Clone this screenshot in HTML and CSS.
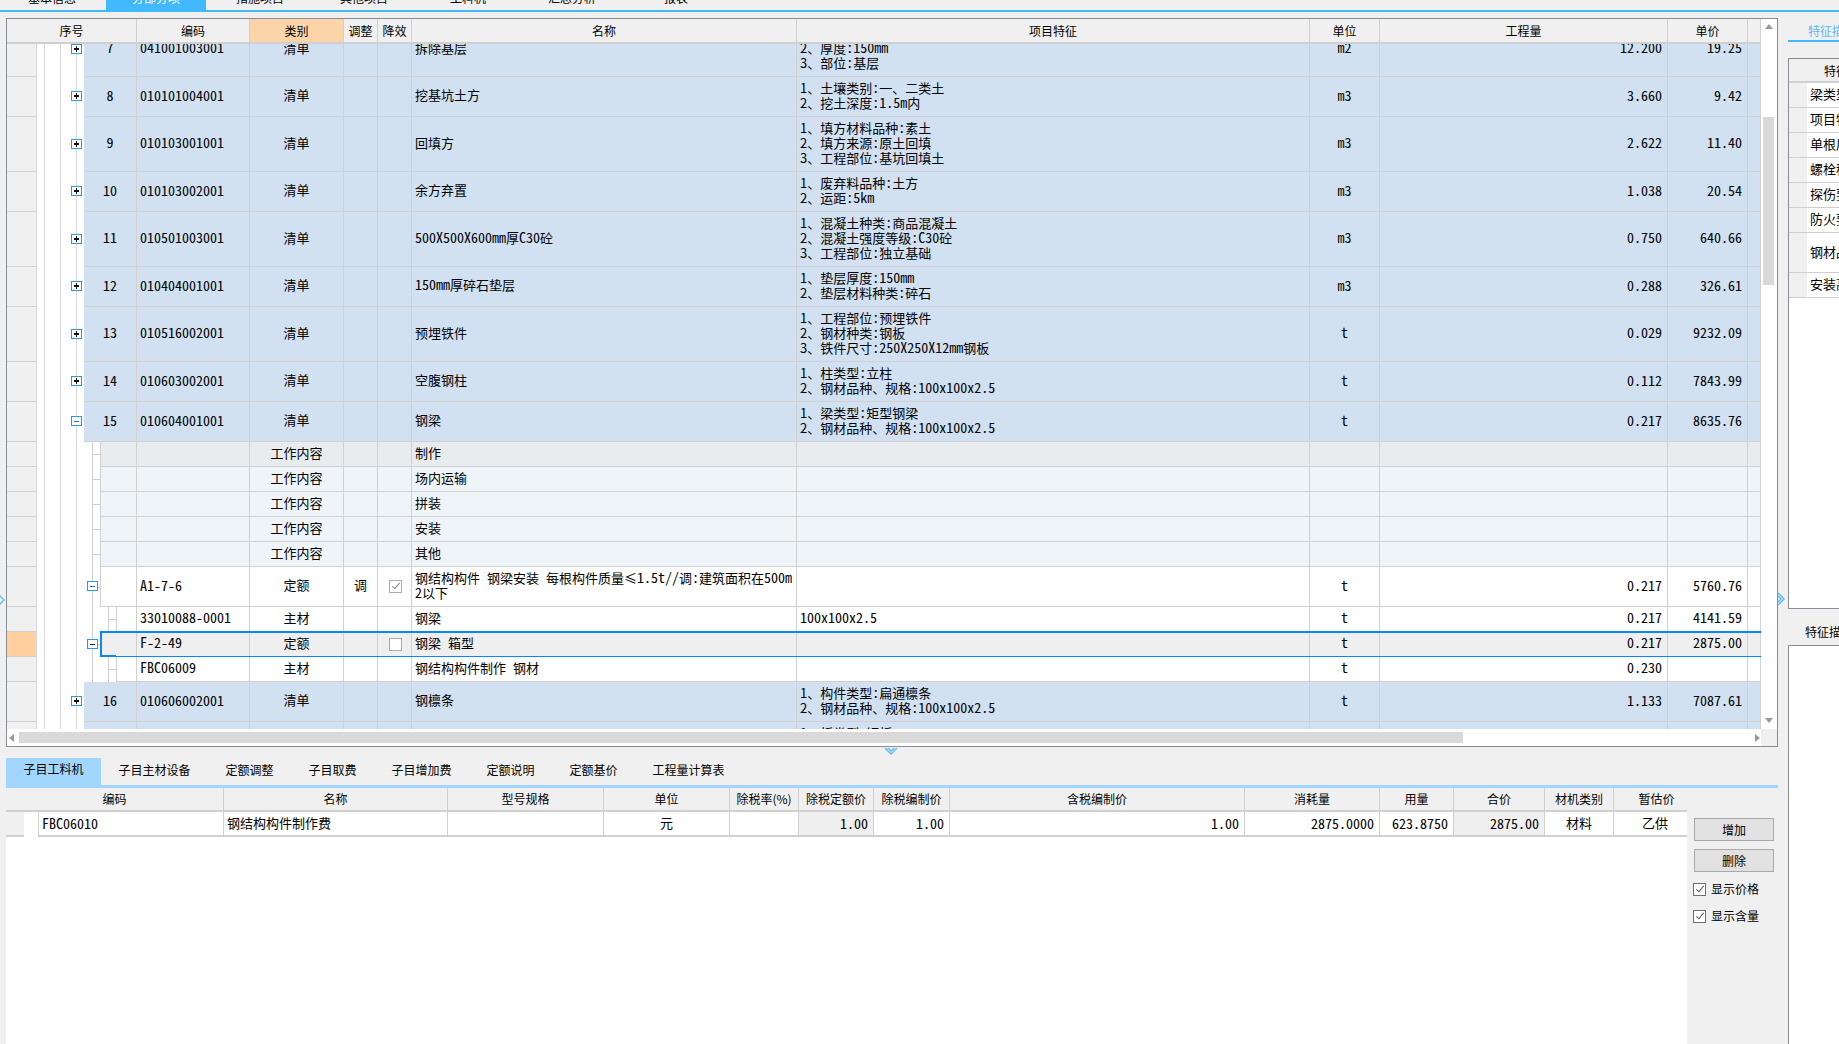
FILE: index.html
```html
<!DOCTYPE html>
<html lang="zh-CN">
<head>
    <meta charset="UTF-8">
    <title>分部分项</title>
    <link rel="stylesheet" href="styles.css">
</head>
<body>
<div class="page">

    <div class="topbar">
        <div class="tabs">
            <div class="tab">基本信息</div>
            <div class="tab active">分部分项</div>
            <div class="tab">措施项目</div>
            <div class="tab">其他项目</div>
            <div class="tab">工料机</div>
            <div class="tab">汇总分析</div>
            <div class="tab">报表</div>
        </div>
    </div>

    <div class="main">
        <div class="left">

            <div class="frame">
                <div class="frame-top">
                    <div class="grid">
                        <table class="grid-head">
                            <colgroup>
                                <col class="c-ind"><col class="c-gut"><col class="c-seq"><col class="c-code"><col class="c-type"><col class="c-adj"><col class="c-dec"><col class="c-name"><col class="c-feat"><col class="c-unit"><col class="c-qty"><col class="c-price"><col class="c-end">
                            </colgroup>
                            <tr>
                                <th colspan="3">序号</th>
                                <th>编码</th>
                                <th class="sorted">类别</th>
                                <th>调整</th>
                                <th>降效</th>
                                <th>名称</th>
                                <th>项目特征</th>
                                <th>单位</th>
                                <th>工程量</th>
                                <th>单价</th>
                                <th></th>
                            </tr>
                        </table>
                        <div class="grid-clip">
                            <table class="grid-body">
                                <colgroup>
                                    <col class="c-ind"><col class="c-gut"><col class="c-seq"><col class="c-code"><col class="c-type"><col class="c-adj"><col class="c-dec"><col class="c-name"><col class="c-feat"><col class="c-unit"><col class="c-qty"><col class="c-price"><col class="c-end">
                                </colgroup>
                                <tr class="q h55">
                                    <td class="ind"></td><td class="gut"><span class="exp plus"></span></td><td class="seq m">7</td>
                                    <td class="m">041001003001</td><td class="ctr">清单</td><td></td><td></td>
                                    <td>拆除基层</td>
                                    <td>1、材质<span class="m">:</span>水泥稳定层<br>2、厚度<span class="m">:150mm</span><br>3、部位<span class="m">:</span>基层</td>
                                    <td class="ctr m">m2</td><td class="num m">12.200</td><td class="num m">19.25</td><td></td>
                                </tr>
                                <tr class="q h40">
                                    <td class="ind"></td><td class="gut"><span class="exp plus"></span></td><td class="seq m">8</td>
                                    <td class="m">010101004001</td><td class="ctr">清单</td><td></td><td></td>
                                    <td>挖基坑土方</td>
                                    <td>1、土壤类别<span class="m">:</span>一、二类土<br>2、挖土深度<span class="m">:1.5m</span>内</td>
                                    <td class="ctr m">m3</td><td class="num m">3.660</td><td class="num m">9.42</td><td></td>
                                </tr>
                                <tr class="q h55">
                                    <td class="ind"></td><td class="gut"><span class="exp plus"></span></td><td class="seq m">9</td>
                                    <td class="m">010103001001</td><td class="ctr">清单</td><td></td><td></td>
                                    <td>回填方</td>
                                    <td>1、填方材料品种<span class="m">:</span>素土<br>2、填方来源<span class="m">:</span>原土回填<br>3、工程部位<span class="m">:</span>基坑回填土</td>
                                    <td class="ctr m">m3</td><td class="num m">2.622</td><td class="num m">11.40</td><td></td>
                                </tr>
                                <tr class="q h40">
                                    <td class="ind"></td><td class="gut"><span class="exp plus"></span></td><td class="seq m">10</td>
                                    <td class="m">010103002001</td><td class="ctr">清单</td><td></td><td></td>
                                    <td>余方弃置</td>
                                    <td>1、废弃料品种<span class="m">:</span>土方<br>2、运距<span class="m">:5km</span></td>
                                    <td class="ctr m">m3</td><td class="num m">1.038</td><td class="num m">20.54</td><td></td>
                                </tr>
                                <tr class="q h55">
                                    <td class="ind"></td><td class="gut"><span class="exp plus"></span></td><td class="seq m">11</td>
                                    <td class="m">010501003001</td><td class="ctr">清单</td><td></td><td></td>
                                    <td><span class="m">500X500X600mm</span>厚<span class="m">C30</span>砼</td>
                                    <td>1、混凝土种类<span class="m">:</span>商品混凝土<br>2、混凝土强度等级<span class="m">:C30</span>砼<br>3、工程部位<span class="m">:</span>独立基础</td>
                                    <td class="ctr m">m3</td><td class="num m">0.750</td><td class="num m">640.66</td><td></td>
                                </tr>
                                <tr class="q h40">
                                    <td class="ind"></td><td class="gut"><span class="exp plus"></span></td><td class="seq m">12</td>
                                    <td class="m">010404001001</td><td class="ctr">清单</td><td></td><td></td>
                                    <td><span class="m">150mm</span>厚碎石垫层</td>
                                    <td>1、垫层厚度<span class="m">:150mm</span><br>2、垫层材料种类<span class="m">:</span>碎石</td>
                                    <td class="ctr m">m3</td><td class="num m">0.288</td><td class="num m">326.61</td><td></td>
                                </tr>
                                <tr class="q h55">
                                    <td class="ind"></td><td class="gut"><span class="exp plus"></span></td><td class="seq m">13</td>
                                    <td class="m">010516002001</td><td class="ctr">清单</td><td></td><td></td>
                                    <td>预埋铁件</td>
                                    <td>1、工程部位<span class="m">:</span>预埋铁件<br>2、钢材种类<span class="m">:</span>钢板<br>3、铁件尺寸<span class="m">:250X250X12mm</span>钢板</td>
                                    <td class="ctr m">t</td><td class="num m">0.029</td><td class="num m">9232.09</td><td></td>
                                </tr>
                                <tr class="q h40">
                                    <td class="ind"></td><td class="gut"><span class="exp plus"></span></td><td class="seq m">14</td>
                                    <td class="m">010603002001</td><td class="ctr">清单</td><td></td><td></td>
                                    <td>空腹钢柱</td>
                                    <td>1、柱类型<span class="m">:</span>立柱<br>2、钢材品种、规格<span class="m">:100x100x2.5</span></td>
                                    <td class="ctr m">t</td><td class="num m">0.112</td><td class="num m">7843.99</td><td></td>
                                </tr>
                                <tr class="q h40">
                                    <td class="ind"></td><td class="gut"><span class="exp minus"></span></td><td class="seq m">15</td>
                                    <td class="m">010604001001</td><td class="ctr">清单</td><td></td><td></td>
                                    <td>钢梁</td>
                                    <td>1、梁类型<span class="m">:</span>矩型钢梁<br>2、钢材品种、规格<span class="m">:100x100x2.5</span></td>
                                    <td class="ctr m">t</td><td class="num m">0.217</td><td class="num m">8635.76</td><td></td>
                                </tr>

                                <tr class="w0 h25">
                                    <td class="ind"></td><td class="gut"></td><td class="s1"></td>
                                    <td></td><td class="ctr">工作内容</td><td></td><td></td>
                                    <td>制作</td><td></td><td></td><td></td><td></td><td></td>
                                </tr>
                                <tr class="w h25">
                                    <td class="ind"></td><td class="gut"></td><td class="s1"></td>
                                    <td></td><td class="ctr">工作内容</td><td></td><td></td>
                                    <td>场内运输</td><td></td><td></td><td></td><td></td><td></td>
                                </tr>
                                <tr class="w h25">
                                    <td class="ind"></td><td class="gut"></td><td class="s1"></td>
                                    <td></td><td class="ctr">工作内容</td><td></td><td></td>
                                    <td>拼装</td><td></td><td></td><td></td><td></td><td></td>
                                </tr>
                                <tr class="w h25">
                                    <td class="ind"></td><td class="gut"></td><td class="s1"></td>
                                    <td></td><td class="ctr">工作内容</td><td></td><td></td>
                                    <td>安装</td><td></td><td></td><td></td><td></td><td></td>
                                </tr>
                                <tr class="w h25">
                                    <td class="ind"></td><td class="gut"></td><td class="s1"></td>
                                    <td></td><td class="ctr">工作内容</td><td></td><td></td>
                                    <td>其他</td><td></td><td></td><td></td><td></td><td></td>
                                </tr>

                                <tr class="d h40">
                                    <td class="ind"></td><td class="gut"></td><td class="s1"><span class="exp minus nested"></span></td>
                                    <td class="m">A1-7-6</td><td class="ctr">定额</td><td class="ctr">调</td>
                                    <td class="ctr"><span class="chk on"></span></td>
                                    <td>钢结构构件<span class="m"> </span>钢梁安装<span class="m"> </span>每根构件质量≤<span class="m">1.5t//</span>调<span class="m">:</span>建筑面积在<span class="m">500m</span><br><span class="m">2</span>以下</td>
                                    <td></td><td class="ctr m">t</td><td class="num m">0.217</td><td class="num m">5760.76</td><td></td>
                                </tr>
                                <tr class="d h25">
                                    <td class="ind"></td><td class="gut"></td><td class="s2"></td>
                                    <td class="m">33010088-0001</td><td class="ctr">主材</td><td></td><td></td>
                                    <td>钢梁</td><td class="m">100x100x2.5</td>
                                    <td class="ctr m">t</td><td class="num m">0.217</td><td class="num m">4141.59</td><td></td>
                                </tr>
                                <tr class="sel h25">
                                    <td class="ind picked"></td><td class="gut"></td>
                                    <td class="s1"><span class="exp minus nested dark"></span><div class="selbox"></div></td>
                                    <td class="m">F-2-49</td><td class="ctr">定额</td><td></td>
                                    <td class="ctr"><span class="chk"></span></td>
                                    <td>钢梁<span class="m"> </span>箱型</td>
                                    <td></td><td class="ctr m">t</td><td class="num m">0.217</td><td class="num m">2875.00</td><td></td>
                                </tr>
                                <tr class="d h25">
                                    <td class="ind"></td><td class="gut"></td><td class="s2"></td>
                                    <td class="m">FBC06009</td><td class="ctr">主材</td><td></td><td></td>
                                    <td>钢结构构件制作<span class="m"> </span>钢材</td>
                                    <td></td><td class="ctr m">t</td><td class="num m">0.230</td><td></td><td></td>
                                </tr>

                                <tr class="q h40">
                                    <td class="ind"></td><td class="gut"><span class="exp plus"></span></td><td class="seq m">16</td>
                                    <td class="m">010606002001</td><td class="ctr">清单</td><td></td><td></td>
                                    <td>钢檩条</td>
                                    <td>1、构件类型<span class="m">:</span>扁通檩条<br>2、钢材品种、规格<span class="m">:100x100x2.5</span></td>
                                    <td class="ctr m">t</td><td class="num m">1.133</td><td class="num m">7087.61</td><td></td>
                                </tr>
                                <tr class="q h40">
                                    <td class="ind"></td><td class="gut"><span class="exp plus"></span></td><td class="seq m">17</td>
                                    <td class="m">010607005001</td><td class="ctr">清单</td><td></td><td></td>
                                    <td>钢板</td>
                                    <td>1、板类型<span class="m">:</span>钢板<br>2、钢材品种、规格<span class="m">:100x100x2.5</span></td>
                                    <td class="ctr m">t</td><td class="num m">0.300</td><td class="num m">6500.00</td><td></td>
                                </tr>
                            </table>
                        </div>
                    </div>
                    <div class="vscroll">
                        <span class="arr up"></span>
                        <div class="vthumb"></div>
                        <span class="arr down"></span>
                    </div>
                </div>
                <div class="hscroll">
                    <span class="arr lf"></span>
                    <div class="hthumb"></div>
                    <span class="arr rt"></span>
                    <div class="corner"></div>
                </div>
            </div>

            <div class="subtabs">
                <div class="subtab active">子目工料机</div>
                <div class="subtab">子目主材设备</div>
                <div class="subtab">定额调整</div>
                <div class="subtab">子目取费</div>
                <div class="subtab">子目增加费</div>
                <div class="subtab">定额说明</div>
                <div class="subtab">定额基价</div>
                <div class="subtab">工程量计算表</div>
            </div>

            <div class="lower">
                <div class="sub">
                    <table class="sub-table">
                        <colgroup>
                            <col class="s-ind"><col class="s-gap"><col class="s-code"><col class="s-name"><col class="s-spec"><col class="s-unit"><col class="s-rate"><col class="s-base"><col class="s-make"><col class="s-tax"><col class="s-use"><col class="s-amt"><col class="s-sum"><col class="s-kind"><col class="s-est">
                        </colgroup>
                        <tr class="sub-head">
                            <th colspan="3">编码</th>
                            <th>名称</th>
                            <th>型号规格</th>
                            <th>单位</th>
                            <th>除税率(%)</th>
                            <th>除税定额价</th>
                            <th>除税编制价</th>
                            <th>含税编制价</th>
                            <th>消耗量</th>
                            <th>用量</th>
                            <th>合价</th>
                            <th>材机类别</th>
                            <th class="last">暂估价</th>
                        </tr>
                        <tr class="sub-row">
                            <td class="ind"></td><td class="blank"></td>
                            <td class="m">FBC06010</td>
                            <td>钢结构构件制作费</td>
                            <td></td>
                            <td class="ctr">元</td>
                            <td></td>
                            <td class="num m gray">1.00</td>
                            <td class="num m">1.00</td>
                            <td class="num m">1.00</td>
                            <td class="num m">2875.0000</td>
                            <td class="num m">623.8750</td>
                            <td class="num m gray">2875.00</td>
                            <td class="ctr">材料</td>
                            <td class="ctr last">乙供</td>
                        </tr>
                    </table>
                </div>
                <div class="side">
                    <div class="btn">增加</div>
                    <div class="btn">删除</div>
                    <label class="opt"><span class="chk dark on"></span>显示价格</label>
                    <label class="opt"><span class="chk dark on"></span>显示含量</label>
                </div>
            </div>
        </div>

        <div class="right">
            <div class="rtab"><span>特征描述</span></div>
            <div class="rbox">
                <table class="feat">
                    <colgroup><col class="f-ind"><col class="f-text"></colgroup>
                    <tr class="feat-head"><th colspan="2">特征</th></tr>
                    <tr><td class="ind"></td><td>梁类型</td></tr>
                    <tr><td class="ind"></td><td>项目特征</td></tr>
                    <tr><td class="ind"></td><td>单根质量</td></tr>
                    <tr><td class="ind"></td><td>螺栓种类</td></tr>
                    <tr><td class="ind"></td><td>探伤要求</td></tr>
                    <tr><td class="ind"></td><td>防火要求</td></tr>
                    <tr class="tall"><td class="ind"></td><td>钢材品种规格</td></tr>
                    <tr><td class="ind"></td><td>安装高度</td></tr>
                </table>
            </div>
            <div class="rlabel">特征描述</div>
            <div class="rbox rbox-fill"></div>
        </div>
    </div>

    <svg class="fold fold-left" viewBox="0 0 5 14"><path d="M-2 1l6 6-6 6" /></svg>
    <svg class="fold fold-right" viewBox="0 0 8 14"><path d="M0 1l6 6-6 6M-3 1l6 6-6 6" /></svg>
    <svg class="fold fold-down" viewBox="0 0 14 8"><path d="M1 0l6 6 6-6M1 -3l6 6 6-6" /></svg>
</div>
</body>
</html>
```

FILE: styles.css
```css
body {
    margin: 0;
    background: #f0f0f0;
    color: #000;
    font-family: "Noto Sans CJK SC", sans-serif;
    font-size: 12px;
}
.page {
    position: relative;
    width: 1839px;
    height: 1044px;
    overflow: hidden;
    display: flex;
    flex-direction: column;
}

/* top tabs, cut off by the window edge */
.topbar {
    height: 12px;
    box-sizing: border-box;
    border-bottom: 2px solid #41b8ff;
    overflow: hidden;
}
.tabs {
    display: flex;
    gap: 4px;
    margin-top: -8px;
    padding-left: 2px;
}
.tab {
    width: 100px;
    height: 18px;
    line-height: 12px;
    text-align: center;
}
.tab.active {
    background: #41b8ff;
    color: white;
}

.main {
    flex: 1;
    min-height: 0;
    display: flex;
}
.left {
    width: 1778px;
    box-sizing: border-box;
    padding: 6px 0 0 6px;
    display: flex;
    flex-direction: column;
}

/* main grid */
.frame {
    height: 729px;
    box-sizing: border-box;
    border: 1px solid #8a8d96;
    background: white;
    display: flex;
    flex-direction: column;
}
.frame-top {
    flex: 1;
    min-height: 0;
    display: flex;
}
.grid {
    width: 1754px;
    display: flex;
    flex-direction: column;
}
.grid-clip {
    flex: 1;
    min-height: 0;
    overflow: hidden;
}
table {
    border-collapse: separate;
    border-spacing: 0;
    table-layout: fixed;
}
.grid-head, .grid-body {
    width: 1754px;
}
.grid-body {
    margin-top: -22px;
}
.c-ind { width: 29px; }
.c-gut { width: 48px; }
.c-seq { width: 53px; }
.c-code { width: 113px; }
.c-type { width: 94px; }
.c-adj { width: 34px; }
.c-dec { width: 34px; }
.c-name { width: 385px; }
.c-feat { width: 513px; }
.c-unit { width: 70px; }
.c-qty { width: 288px; }
.c-price { width: 80px; }
.c-end { width: 13px; }

th {
    box-sizing: border-box;
    padding: 0;
    font-weight: normal;
    background: #f0f0f0;
    border-right: 1px solid #d0d0d0;
    border-bottom: 2px solid #d0d0d0;
    overflow: hidden;
    white-space: nowrap;
}
.grid-head th {
    height: 25px;
}
.grid-head th.sorted {
    background: #fcd4a9;
}
td {
    box-sizing: border-box;
    padding: 0 3px 4px;
    font-size: 13px;
    line-height: 15px;
    white-space: nowrap;
    overflow: hidden;
    border-right: 1px solid #d0d0d0;
    border-bottom: 1px solid #d0d0d0;
}
.h25 { height: 25px; }
.h40 { height: 40px; }
.h55 { height: 55px; }

/* latin text and digits sit in a narrower font than the chinese */
.m {
    font-family: "Noto Sans Mono CJK SC", "Liberation Mono", monospace;
    font-size: 14px;
    white-space: pre;
}
span.m {
    line-height: 1;
}
td.m {
    padding-bottom: 3px;
}
.ctr { text-align: center; }
.num {
    text-align: right;
    padding-right: 5px;
}

tr.q td { background: #d1e1f2; }
tr.w td { background: #eff4f9; }
tr.w0 td { background: #e9ecef; }
tr.d td { background: white; }
tr.sel td { background: #efefef; }

.grid-body td.seq {
    text-align: center;
    padding: 0 0 3px;
}
.grid-body td.ind, .sub-table td.ind, .feat td.ind {
    background: #f0f0f0;
    padding: 0;
    border-right: none;
}
.grid-body td.picked {
    background: #ffcf9e;
}
.grid-body td.gut {
    --l: linear-gradient(#d8d8d8, #d8d8d8);
    position: relative;
    overflow: visible;
    padding: 0;
    border: none;
    background: var(--l) 0 0 / 1px 100% no-repeat,
        var(--l) 8px 0 / 1px 100% no-repeat,
        var(--l) 24px 0 / 1px 100% no-repeat,
        var(--l) 40px 0 / 1px 100% no-repeat,
        white;
}

/* tree part of the child rows, the coloured cell starts 16px in */
.grid-body td.s1, .grid-body td.s2 {
    --l: linear-gradient(#d0d0d0, #d0d0d0);
    position: relative;
    overflow: visible;
    padding: 0;
    border-bottom: none;
}
.grid-body td.s1 {
    --fill: white;
    background: var(--l) right bottom / 36px 1px no-repeat,
        var(--l) 16px 0 / 1px 100% no-repeat,
        var(--l) 8px 0 / 1px 100% no-repeat,
        var(--l) 8px 50% / 8px 1px no-repeat,
        linear-gradient(var(--fill), var(--fill)) right 0 / 36px 100% no-repeat,
        white;
}
tr.w td.s1 { --fill: #eff4f9; }
tr.w0 td.s1 { --fill: #e9ecef; }
tr.sel td.s1 { --fill: #efefef; }
.grid-body td.s2 {
    background: var(--l) right bottom / 20px 1px no-repeat,
        var(--l) 8px 0 / 1px 100% no-repeat,
        var(--l) 24px 0 / 1px 100% no-repeat,
        var(--l) 32px 0 / 1px 100% no-repeat,
        var(--l) 24px 50% / 8px 1px no-repeat,
        white;
}

/* expand and collapse boxes */
.exp {
    position: absolute;
    left: 35px;
    top: 50%;
    width: 11px;
    height: 10px;
    margin-top: -6px;
    box-sizing: border-box;
    border: 1px solid #2a98dc;
    background: white;
}
.exp.nested {
    left: 3px;
}
.exp::before {
    content: "";
    position: absolute;
    left: 2px;
    top: 3px;
    width: 5px;
    height: 2px;
    background: #111;
}
.exp.minus::before {
    height: 1px;
    top: 4px;
    background: #2a6fb0;
}
.exp.dark::before {
    background: #0a1f8a;
}
.exp.plus::after {
    content: "";
    position: absolute;
    left: 4px;
    top: 1px;
    width: 1px;
    height: 6px;
    background: #111;
}

/* current row outline */
.selbox {
    position: absolute;
    left: 16px;
    top: -1px;
    width: 1661px;
    height: 26px;
    box-sizing: border-box;
    border: solid #0a84ff;
    border-width: 2px 0 1px 2px;
    z-index: 1;
}
.selbox::after {
    content: "";
    position: absolute;
    left: -2px;
    bottom: -1px;
    width: 16px;
    height: 2px;
    background: #0a84ff;
}

/* checkboxes */
.chk {
    display: inline-block;
    position: relative;
    top: 1px;
    left: 1px;
    width: 13px;
    height: 13px;
    box-sizing: border-box;
    border: 1px solid #ababab;
    background: white;
    vertical-align: middle;
}
.chk.on::after {
    content: "";
    position: absolute;
    left: 4px;
    top: 0;
    width: 4px;
    height: 8px;
    box-sizing: border-box;
    border: solid #8c8c8c;
    border-width: 0 1px 1px 0;
    transform: rotate(40deg);
}
.chk.dark {
    left: 0;
    border-color: #707070;
}
.chk.dark::after {
    border-color: #606060;
}

/* scrollbars */
.vscroll {
    width: 16px;
    display: flex;
    flex-direction: column;
    align-items: center;
}
.vthumb {
    width: 11px;
    height: 168px;
    margin-top: 88px;
    margin-left: -1px;
    background: #d9d9d9;
}
.hscroll {
    height: 17px;
    display: flex;
    align-items: center;
}
.hthumb {
    width: 1444px;
    height: 11px;
    margin-left: 5px;
    background: #d9d9d9;
}
.corner {
    width: 16px;
    height: 17px;
    margin-left: auto;
    background: #f0f0f0;
}
.arr {
    display: block;
    width: 0;
    height: 0;
    border: solid transparent;
}
.arr.up {
    margin-top: 5px;
    border-width: 0 4px 5px;
    border-bottom-color: #999;
}
.arr.down {
    margin-top: auto;
    margin-bottom: 6px;
    border-width: 5px 4px 0;
    border-top-color: #999;
}
.arr.lf {
    margin-left: 2px;
    border-width: 4px 5px 4px 0;
    border-right-color: #999;
}
.arr.rt {
    margin-left: 292px;
    border-width: 4px 0 4px 5px;
    border-left-color: #999;
}

/* lower tabs */
.subtabs {
    margin-top: 11px;
    height: 30px;
    box-sizing: border-box;
    border-bottom: 3px solid #a0d6ff;
    display: flex;
}
.subtab {
    padding: 0 17.5px;
    line-height: 23px;
}
.subtab.active {
    background: #a0d6ff;
    line-height: 22px;
}

.lower {
    flex: 1;
    min-height: 0;
    display: flex;
}
.sub {
    width: 1681px;
    background: white;
}
.sub-table {
    width: 1681px;
}
.s-ind { width: 18px; }
.s-gap { width: 15px; }
.s-code { width: 185px; }
.s-name { width: 224px; }
.s-spec { width: 156px; }
.s-unit { width: 126px; }
.s-rate { width: 69px; }
.s-base { width: 75px; }
.s-make { width: 76px; }
.s-tax { width: 295px; }
.s-use { width: 135px; }
.s-amt { width: 74px; }
.s-sum { width: 91px; }
.s-kind { width: 69px; }
.s-est { width: 73px; }
.sub-head th {
    height: 24px;
    padding-bottom: 2px;
}
.sub-head th.last, .sub-table td.last {
    padding-left: 12px;
    border-right: none;
}
.sub-row {
    height: 25px;
}
.sub-table td {
    padding-bottom: 2px;
    border-bottom-width: 2px;
}
.sub-table td.m {
    padding-bottom: 1px;
}
.sub-table td.blank {
    border-bottom: none;
    border-right: 1px solid #d0d0d0;
}
.sub-table td.gray {
    background: #efefef;
}
.side {
    flex: 1;
    padding: 30px 0 0 7px;
}
.btn {
    width: 80px;
    height: 23px;
    box-sizing: border-box;
    margin-bottom: 8px;
    border: 1px solid #a9a9a9;
    background: #e1e1e1;
    line-height: 21px;
    text-align: center;
}
.opt {
    display: flex;
    align-items: center;
    gap: 5px;
    height: 13px;
    margin: 10px 0 0 -1px;
}
.opt + .opt {
    margin-top: 14px;
}

/* right panel */
.right {
    flex: 1;
    min-width: 0;
    margin-left: 10px;
    display: flex;
    flex-direction: column;
    overflow: hidden;
}
.rtab {
    height: 30px;
    box-sizing: border-box;
    border-bottom: 2px solid #41b8ff;
    padding: 10px 0 0 20px;
    line-height: 18px;
    color: #5cb8f5;
    white-space: nowrap;
}
.rbox {
    height: 551px;
    margin-top: 16px;
    box-sizing: border-box;
    border: 1px solid #8a8d96;
    border-right: none;
    background: white;
    overflow: hidden;
}
.rlabel {
    height: 36px;
    box-sizing: border-box;
    padding: 14px 0 0 17px;
    line-height: 18px;
    white-space: nowrap;
}
.rbox-fill {
    flex: 1;
    margin-top: 0;
    border-bottom: none;
}
.feat {
    width: 200px;
}
.f-ind { width: 18px; }
.f-text { width: 182px; }
.feat td {
    height: 25px;
    padding-bottom: 3px;
}
.feat tr.tall td {
    height: 40px;
}
.feat-head th {
    height: 24px;
    padding-left: 35px;
    text-align: left;
}

/* fold arrows on the splitters */
.fold {
    position: absolute;
    fill: none;
    stroke: #62bdf5;
    stroke-width: 1.5;
    overflow: hidden;
}
.fold-left {
    left: 0;
    top: 593px;
    width: 5px;
    height: 14px;
}
.fold-right {
    left: 1778px;
    top: 592px;
    width: 8px;
    height: 14px;
}
.fold-down {
    left: 884px;
    top: 748px;
    width: 14px;
    height: 8px;
}
```
